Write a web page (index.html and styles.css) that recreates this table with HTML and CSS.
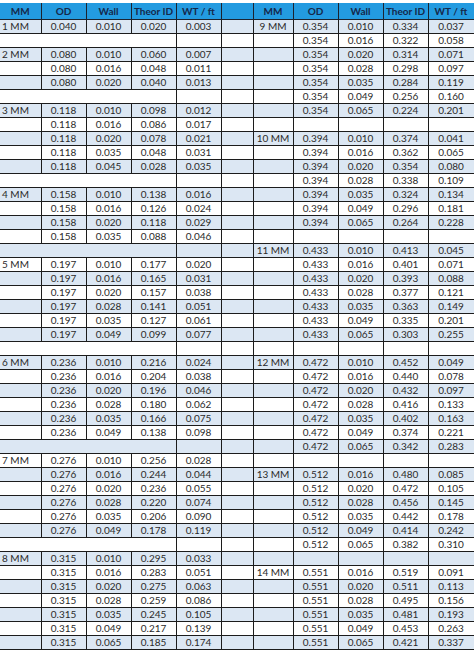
FILE: index.html
```html
<!DOCTYPE html>
<html>
<head>
<meta charset="utf-8">
<link rel="stylesheet" href="styles.css">
</head>
<body>
<table class="spec">
<colgroup>
<col class="c-mm"><col class="c-n"><col class="c-n"><col class="c-n"><col class="c-n"><col class="c-gap"><col class="c-mm2"><col class="c-n"><col class="c-n"><col class="c-n"><col class="c-last">
</colgroup>
<thead>
<tr><th>MM</th><th>OD</th><th>Wall</th><th>Theor ID</th><th>WT / ft</th><th class="gap"></th><th>MM</th><th>OD</th><th>Wall</th><th>Theor ID</th><th>WT / ft</th></tr>
</thead>
<tbody>
<tr><td class="mm">1 MM</td><td>0.040</td><td>0.010</td><td>0.020</td><td>0.003</td><td class="gap"></td><td class="mm2">9 MM</td><td>0.354</td><td>0.010</td><td>0.334</td><td>0.037</td></tr>
<tr><td class="blank" colspan="4"></td><td></td><td class="gap"></td><td class="mm2"></td><td>0.354</td><td>0.016</td><td>0.322</td><td>0.058</td></tr>
<tr><td class="mm">2 MM</td><td>0.080</td><td>0.010</td><td>0.060</td><td>0.007</td><td class="gap"></td><td class="mm2"></td><td>0.354</td><td>0.020</td><td>0.314</td><td>0.071</td></tr>
<tr><td class="mm"></td><td>0.080</td><td>0.016</td><td>0.048</td><td>0.011</td><td class="gap"></td><td class="mm2"></td><td>0.354</td><td>0.028</td><td>0.298</td><td>0.097</td></tr>
<tr><td class="mm"></td><td>0.080</td><td>0.020</td><td>0.040</td><td>0.013</td><td class="gap"></td><td class="mm2"></td><td>0.354</td><td>0.035</td><td>0.284</td><td>0.119</td></tr>
<tr><td class="blank" colspan="4"></td><td></td><td class="gap"></td><td class="mm2"></td><td>0.354</td><td>0.049</td><td>0.256</td><td>0.160</td></tr>
<tr><td class="mm">3 MM</td><td>0.118</td><td>0.010</td><td>0.098</td><td>0.012</td><td class="gap"></td><td class="mm2"></td><td>0.354</td><td>0.065</td><td>0.224</td><td>0.201</td></tr>
<tr><td class="mm"></td><td>0.118</td><td>0.016</td><td>0.086</td><td>0.017</td><td class="gap"></td><td class="mm2"></td><td></td><td></td><td></td><td></td></tr>
<tr><td class="mm"></td><td>0.118</td><td>0.020</td><td>0.078</td><td>0.021</td><td class="gap"></td><td class="mm2">10 MM</td><td>0.394</td><td>0.010</td><td>0.374</td><td>0.041</td></tr>
<tr><td class="mm"></td><td>0.118</td><td>0.035</td><td>0.048</td><td>0.031</td><td class="gap"></td><td class="mm2"></td><td>0.394</td><td>0.016</td><td>0.362</td><td>0.065</td></tr>
<tr><td class="mm"></td><td>0.118</td><td>0.045</td><td>0.028</td><td>0.035</td><td class="gap"></td><td class="mm2"></td><td>0.394</td><td>0.020</td><td>0.354</td><td>0.080</td></tr>
<tr><td class="blank" colspan="4"></td><td></td><td class="gap"></td><td class="mm2"></td><td>0.394</td><td>0.028</td><td>0.338</td><td>0.109</td></tr>
<tr><td class="mm">4 MM</td><td>0.158</td><td>0.010</td><td>0.138</td><td>0.016</td><td class="gap"></td><td class="mm2"></td><td>0.394</td><td>0.035</td><td>0.324</td><td>0.134</td></tr>
<tr><td class="mm"></td><td>0.158</td><td>0.016</td><td>0.126</td><td>0.024</td><td class="gap"></td><td class="mm2"></td><td>0.394</td><td>0.049</td><td>0.296</td><td>0.181</td></tr>
<tr><td class="mm"></td><td>0.158</td><td>0.020</td><td>0.118</td><td>0.029</td><td class="gap"></td><td class="mm2"></td><td>0.394</td><td>0.065</td><td>0.264</td><td>0.228</td></tr>
<tr><td class="mm"></td><td>0.158</td><td>0.035</td><td>0.088</td><td>0.046</td><td class="gap"></td><td class="mm2"></td><td></td><td></td><td></td><td></td></tr>
<tr><td class="blank" colspan="4"></td><td></td><td class="gap"></td><td class="mm2">11 MM</td><td>0.433</td><td>0.010</td><td>0.413</td><td>0.045</td></tr>
<tr><td class="mm">5 MM</td><td>0.197</td><td>0.010</td><td>0.177</td><td>0.020</td><td class="gap"></td><td class="mm2"></td><td>0.433</td><td>0.016</td><td>0.401</td><td>0.071</td></tr>
<tr><td class="mm"></td><td>0.197</td><td>0.016</td><td>0.165</td><td>0.031</td><td class="gap"></td><td class="mm2"></td><td>0.433</td><td>0.020</td><td>0.393</td><td>0.088</td></tr>
<tr><td class="mm"></td><td>0.197</td><td>0.020</td><td>0.157</td><td>0.038</td><td class="gap"></td><td class="mm2"></td><td>0.433</td><td>0.028</td><td>0.377</td><td>0.121</td></tr>
<tr><td class="mm"></td><td>0.197</td><td>0.028</td><td>0.141</td><td>0.051</td><td class="gap"></td><td class="mm2"></td><td>0.433</td><td>0.035</td><td>0.363</td><td>0.149</td></tr>
<tr><td class="mm"></td><td>0.197</td><td>0.035</td><td>0.127</td><td>0.061</td><td class="gap"></td><td class="mm2"></td><td>0.433</td><td>0.049</td><td>0.335</td><td>0.201</td></tr>
<tr><td class="mm"></td><td>0.197</td><td>0.049</td><td>0.099</td><td>0.077</td><td class="gap"></td><td class="mm2"></td><td>0.433</td><td>0.065</td><td>0.303</td><td>0.255</td></tr>
<tr><td class="blank" colspan="4"></td><td></td><td class="gap"></td><td class="mm2"></td><td></td><td></td><td></td><td></td></tr>
<tr><td class="mm">6 MM</td><td>0.236</td><td>0.010</td><td>0.216</td><td>0.024</td><td class="gap"></td><td class="mm2">12 MM</td><td>0.472</td><td>0.010</td><td>0.452</td><td>0.049</td></tr>
<tr><td class="mm"></td><td>0.236</td><td>0.016</td><td>0.204</td><td>0.038</td><td class="gap"></td><td class="mm2"></td><td>0.472</td><td>0.016</td><td>0.440</td><td>0.078</td></tr>
<tr><td class="mm"></td><td>0.236</td><td>0.020</td><td>0.196</td><td>0.046</td><td class="gap"></td><td class="mm2"></td><td>0.472</td><td>0.020</td><td>0.432</td><td>0.097</td></tr>
<tr><td class="mm"></td><td>0.236</td><td>0.028</td><td>0.180</td><td>0.062</td><td class="gap"></td><td class="mm2"></td><td>0.472</td><td>0.028</td><td>0.416</td><td>0.133</td></tr>
<tr><td class="mm"></td><td>0.236</td><td>0.035</td><td>0.166</td><td>0.075</td><td class="gap"></td><td class="mm2"></td><td>0.472</td><td>0.035</td><td>0.402</td><td>0.163</td></tr>
<tr><td class="mm"></td><td>0.236</td><td>0.049</td><td>0.138</td><td>0.098</td><td class="gap"></td><td class="mm2"></td><td>0.472</td><td>0.049</td><td>0.374</td><td>0.221</td></tr>
<tr><td class="blank" colspan="4"></td><td></td><td class="gap"></td><td class="mm2"></td><td>0.472</td><td>0.065</td><td>0.342</td><td>0.283</td></tr>
<tr><td class="mm">7 MM</td><td>0.276</td><td>0.010</td><td>0.256</td><td>0.028</td><td class="gap"></td><td class="mm2"></td><td></td><td></td><td></td><td></td></tr>
<tr><td class="mm"></td><td>0.276</td><td>0.016</td><td>0.244</td><td>0.044</td><td class="gap"></td><td class="mm2">13 MM</td><td>0.512</td><td>0.016</td><td>0.480</td><td>0.085</td></tr>
<tr><td class="mm"></td><td>0.276</td><td>0.020</td><td>0.236</td><td>0.055</td><td class="gap"></td><td class="mm2"></td><td>0.512</td><td>0.020</td><td>0.472</td><td>0.105</td></tr>
<tr><td class="mm"></td><td>0.276</td><td>0.028</td><td>0.220</td><td>0.074</td><td class="gap"></td><td class="mm2"></td><td>0.512</td><td>0.028</td><td>0.456</td><td>0.145</td></tr>
<tr><td class="mm"></td><td>0.276</td><td>0.035</td><td>0.206</td><td>0.090</td><td class="gap"></td><td class="mm2"></td><td>0.512</td><td>0.035</td><td>0.442</td><td>0.178</td></tr>
<tr><td class="mm"></td><td>0.276</td><td>0.049</td><td>0.178</td><td>0.119</td><td class="gap"></td><td class="mm2"></td><td>0.512</td><td>0.049</td><td>0.414</td><td>0.242</td></tr>
<tr><td class="blank" colspan="4"></td><td></td><td class="gap"></td><td class="mm2"></td><td>0.512</td><td>0.065</td><td>0.382</td><td>0.310</td></tr>
<tr><td class="mm">8 MM</td><td>0.315</td><td>0.010</td><td>0.295</td><td>0.033</td><td class="gap"></td><td class="mm2"></td><td></td><td></td><td></td><td></td></tr>
<tr><td class="mm"></td><td>0.315</td><td>0.016</td><td>0.283</td><td>0.051</td><td class="gap"></td><td class="mm2">14 MM</td><td>0.551</td><td>0.016</td><td>0.519</td><td>0.091</td></tr>
<tr><td class="mm"></td><td>0.315</td><td>0.020</td><td>0.275</td><td>0.063</td><td class="gap"></td><td class="mm2"></td><td>0.551</td><td>0.020</td><td>0.511</td><td>0.113</td></tr>
<tr><td class="mm"></td><td>0.315</td><td>0.028</td><td>0.259</td><td>0.086</td><td class="gap"></td><td class="mm2"></td><td>0.551</td><td>0.028</td><td>0.495</td><td>0.156</td></tr>
<tr><td class="mm"></td><td>0.315</td><td>0.035</td><td>0.245</td><td>0.105</td><td class="gap"></td><td class="mm2"></td><td>0.551</td><td>0.035</td><td>0.481</td><td>0.193</td></tr>
<tr><td class="mm"></td><td>0.315</td><td>0.049</td><td>0.217</td><td>0.139</td><td class="gap"></td><td class="mm2"></td><td>0.551</td><td>0.049</td><td>0.453</td><td>0.263</td></tr>
<tr><td class="mm"></td><td>0.315</td><td>0.065</td><td>0.185</td><td>0.174</td><td class="gap"></td><td class="mm2"></td><td>0.551</td><td>0.065</td><td>0.421</td><td>0.337</td></tr>
</tbody>
</table>
</body>
</html>
```

FILE: styles.css
```css
html, body {
  margin: 0;
  padding: 0;
  background: #ffffff;
}

body {
  padding-top: 3px;
}

.spec {
  border-collapse: collapse;
  table-layout: fixed;
  width: 474px;
  font-family: Lato, "Open Sans", sans-serif;
  font-size: 10px;
  color: #2a2a2a;
}

.c-mm { width: 41px; }
.c-n { width: 45px; }
.c-gap { width: 32px; }
.c-mm2 { width: 40px; }
.c-last { width: 46px; }

.spec th {
  height: 16px;
  padding: 0;
  background: #239be0;
  color: #15284a;
  font-size: 10px;
  font-weight: 700;
  text-align: center;
  border: 1px solid #1c2430;
  border-top: none;
  line-height: 15px;
  white-space: nowrap;
}

.spec td {
  height: 13px;
  padding: 0;
  line-height: 13px;
  text-align: center;
  border: 1px solid #1c1c1c;
  white-space: nowrap;
}

.spec tr > :first-child {
  border-left: none;
}

.spec tbody tr:nth-child(odd) {
  background: #dce7f3;
}

.spec td.mm {
  text-align: left;
  padding-left: 2px;
}
```
